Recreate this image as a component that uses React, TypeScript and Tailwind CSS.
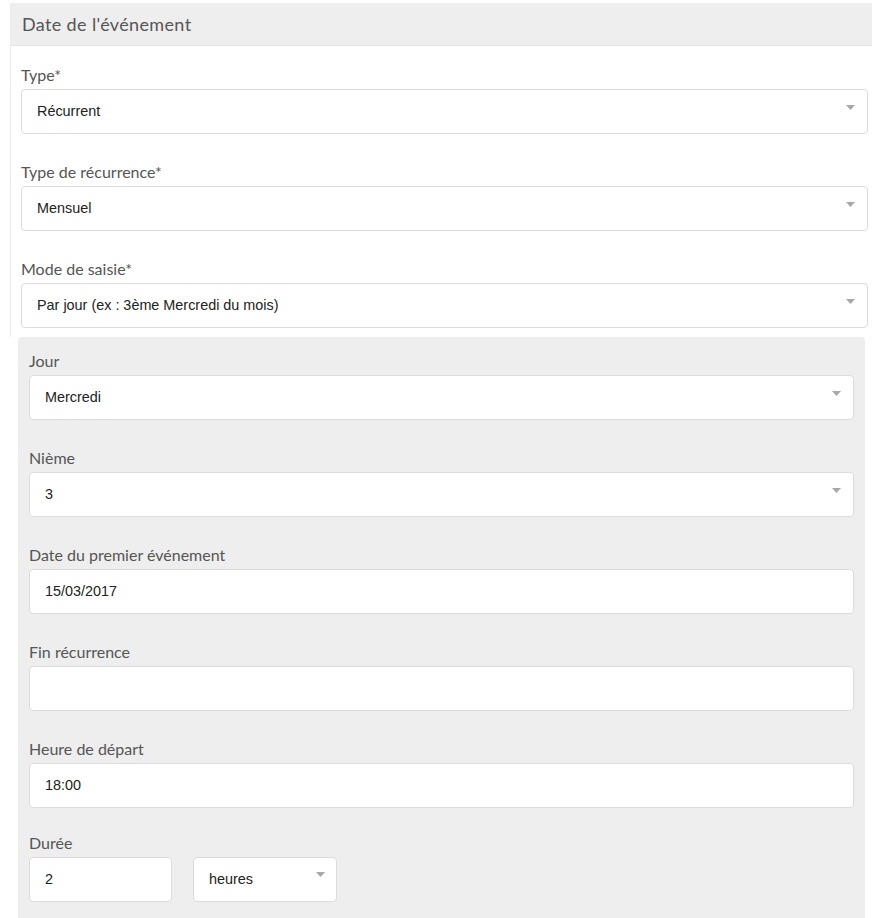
import React from "react";

const labelFont = { fontFamily: "Lato, 'Noto Sans', sans-serif" };

function Arrow() {
  return (
    <svg width="9" height="5" viewBox="0 0 9 5" className="absolute right-[12px] top-[15px]">
      <path d="M0 0 L9 0 L4.5 5 Z" fill="#a8a8a8" />
    </svg>
  );
}

function Field({ label, value = "", select = false, first = false }: { label: string; value?: string; select?: boolean; first?: boolean }) {
  return (
    <div className={first ? "" : "mt-[28px]"}>
      <div className="text-[16px] leading-5 text-[#555] mb-[4px]" style={labelFont}>{label}</div>
      <div className="relative h-[45px] bg-white border border-[#dcdcdc] rounded-[4px] flex items-center pl-[15px] text-[14.4px] text-[#222] font-['Liberation_Sans',Arial,sans-serif]">
        {value}
        {select && <Arrow />}
      </div>
    </div>
  );
}

export default function App() {
  return (
    <div className="bg-white min-h-screen pt-[3px] pl-[10px]">
      <div className="h-[43px] bg-[#eeeeee] border-b border-[#e6e6e6] flex items-center pl-[12px] text-[18px] tracking-[0.02em] text-[#555]" style={labelFont}>
        Date de l'événement
      </div>
      <div className="border-l border-[#ececec] pl-[10px] pr-[4px] pt-[19px] pb-[9px]">
        <Field first label="Type*" value="Récurrent" select />
        <Field label="Type de récurrence*" value="Mensuel" select />
        <Field label="Mode de saisie*" value="Par jour (ex : 3ème Mercredi du mois)" select />
      </div>
      <div className="ml-[8px] mr-[7px] bg-[#eeeeee] rounded-t-[4px] pt-[14px] pl-[11px] pr-[11px] pb-[24px]">
        <Field first label="Jour" value="Mercredi" select />
        <Field label="Nième" value="3" select />
        <Field label="Date du premier événement" value="15/03/2017" />
        <Field label="Fin récurrence" />
        <Field label="Heure de départ" value="18:00" />
        <div className="mt-[25px]">
          <div className="text-[16px] leading-5 text-[#555] mb-[4px]" style={labelFont}>Durée</div>
          <div className="flex gap-[21px]">
            <div className="w-[143px] h-[45px] bg-white border border-[#dcdcdc] rounded-[4px] flex items-center pl-[15px] text-[14.4px] text-[#222] font-['Liberation_Sans',Arial,sans-serif]">2</div>
            <div className="relative w-[144px] h-[45px] bg-white border border-[#dcdcdc] rounded-[4px] flex items-center pl-[15px] text-[14.4px] text-[#222] font-['Liberation_Sans',Arial,sans-serif]">
              heures
              <svg width="9" height="5" viewBox="0 0 9 5" className="absolute right-[11px] top-[14px]">
                <path d="M0 0 L9 0 L4.5 5 Z" fill="#a8a8a8" />
              </svg>
            </div>
          </div>
        </div>
      </div>
    </div>
  );
}
